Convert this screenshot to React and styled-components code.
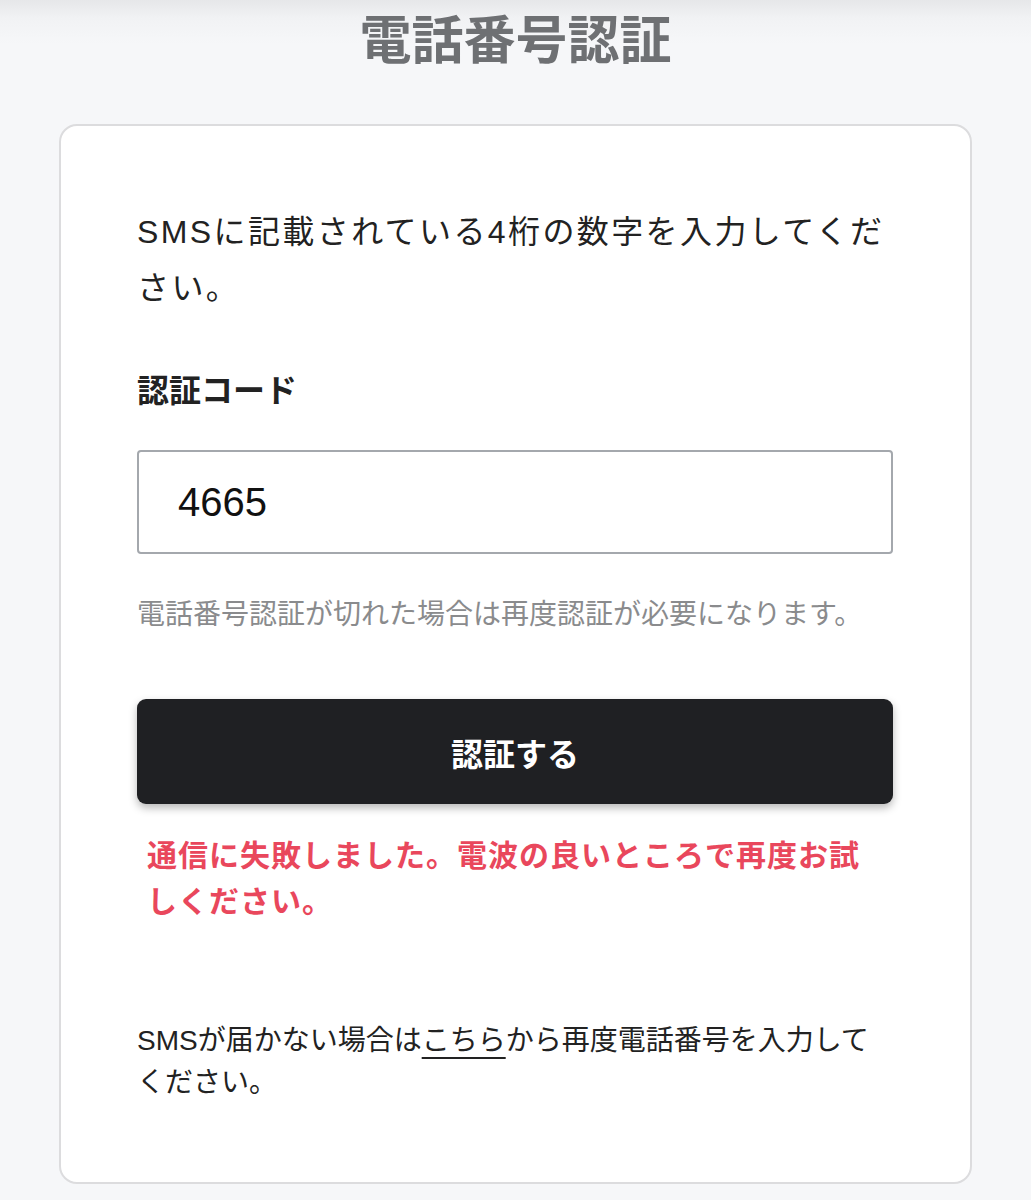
import React from "react";
import styled, { createGlobalStyle } from "styled-components";

const GlobalStyle = createGlobalStyle`
  html, body {
    margin: 0;
    padding: 0;
    background: #f6f7f9;
  }
  body {
    font-family: "Liberation Sans", "Noto Sans CJK JP", sans-serif;
    color: #222;
  }
  * { box-sizing: border-box; }
`;

const Page = styled.div`
  min-height: 1200px;
  background: linear-gradient(#e6e7e9 0px, #f1f2f4 18px, #f6f7f9 44px, #f6f7f9 100%);
  padding: 10px 59px 20px;
`;

const Title = styled.h1`
  margin: 0;
  text-align: center;
  font-size: 52px;
  line-height: 62px;
  font-weight: 700;
  color: #6e7073;
`;

const Card = styled.div`
  margin-top: 52px;
  background: #fff;
  border: 2px solid #dcdcde;
  border-radius: 18px;
  padding: 78px 77px 78px 76px;
  display: flex;
  flex-direction: column;
`;

const Lead = styled.p`
  margin: 0;
  font-size: 32px;
  line-height: 56px;
  letter-spacing: 2.4px;
  color: #222;
`;

const Label = styled.label`
  margin-top: 51px;
  font-size: 32px;
  line-height: 48px;
  font-weight: 700;
  color: #222;
`;

const CodeInput = styled.input`
  margin-top: 35px;
  height: 104px;
  width: 100%;
  border: 2px solid #a4a8ad;
  border-radius: 4px;
  padding: 0 39px;
  font-family: "Liberation Sans", "Noto Sans CJK JP", sans-serif;
  font-size: 40px;
  color: #111;
  background: #fff;
  outline: none;
`;

const Hint = styled.p`
  margin: 41px 0 0;
  font-size: 28px;
  line-height: 40px;
  color: #8a8b8d;
`;

const SubmitButton = styled.button`
  margin-top: 64px;
  height: 105px;
  width: 100%;
  border: none;
  border-radius: 9px;
  background: #1f2023;
  color: #fff;
  font-family: "Liberation Sans", "Noto Sans CJK JP", sans-serif;
  font-size: 32px;
  font-weight: 700;
  box-shadow: 0 4px 9px rgba(0, 0, 0, 0.28);
  cursor: pointer;
`;

const ErrorText = styled.p`
  margin: 29px 0 0;
  padding: 0 10px;
  font-size: 30px;
  line-height: 46px;
  letter-spacing: 1px;
  font-weight: 700;
  color: #e9475c;
`;

const Footer = styled.p`
  margin: 95px 0 0;
  padding-right: 20px;
  font-size: 28px;
  line-height: 42px;
  color: #222;
`;

const TextLink = styled.a`
  color: inherit;
  text-decoration: underline;
  text-decoration-thickness: 2px;
  text-underline-offset: 7px;
  cursor: pointer;
`;

export default function App() {
  return (
    <>
      <GlobalStyle />
      <Page>
        <Title>電話番号認証</Title>
        <Card>
          <Lead>SMSに記載されている4桁の数字を入力してください。</Lead>
          <Label htmlFor="code">認証コード</Label>
          <CodeInput id="code" defaultValue="4665" inputMode="numeric" />
          <Hint>電話番号認証が切れた場合は再度認証が必要になります。</Hint>
          <SubmitButton type="button">認証する</SubmitButton>
          <ErrorText>通信に失敗しました。電波の良いところで再度お試しください。</ErrorText>
          <Footer>
            SMSが届かない場合は<TextLink>こちら</TextLink>から再度電話番号を入力してください。
          </Footer>
        </Card>
      </Page>
    </>
  );
}
